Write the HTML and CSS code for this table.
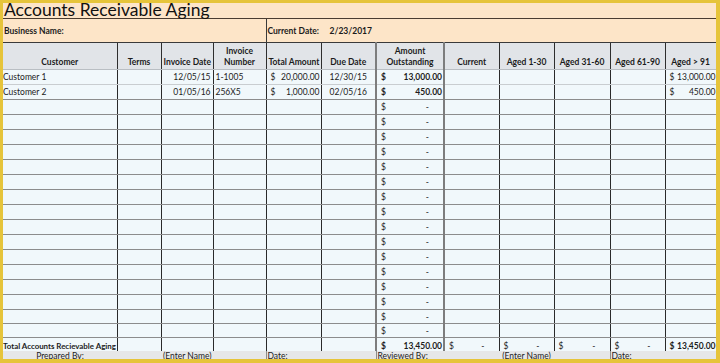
FILE: index.html
```html
<!DOCTYPE html>
<html>
<head>
<meta charset="utf-8">
<link rel="stylesheet" href="styles.css">
</head>
<body>
<div class="frame">
<div class="sheet">
<table class="grid">
<colgroup>
<col style="width:114px"><col style="width:44px"><col style="width:52px"><col style="width:53px"><col style="width:55px"><col style="width:55px"><col style="width:68px"><col style="width:55px"><col style="width:55px"><col style="width:56px"><col style="width:55px"><col style="width:51px">
</colgroup>
<tr class="title-row"><td colspan="12" class="title">Accounts Receivable Aging</td></tr>
<tr class="biz-row"><td colspan="4" class="biz">Business Name:</td><td colspan="8" class="biz date-cell"><span class="lbl">Current Date:</span><span>2/23/2017</span></td></tr>
<tr class="head-row">
<th>Customer</th><th>Terms</th><th>Invoice Date</th><th>Invoice<br>Number</th><th>Total Amount</th><th>Due Date</th><th class="ao">Amount<br>Outstanding</th><th>Current</th><th>Aged 1-30</th><th>Aged 31-60</th><th>Aged 61-90</th><th>Aged &gt; 91</th>
</tr>
<tr class="r first"><td>Customer 1</td><td></td><td class="right">12/05/15</td><td>1-1005</td><td class="m"><div class="acc"><span>$</span><span>20,000.00</span></div></td><td class="center">12/30/15</td><td class="ao m"><div class="acc b"><span>$</span><span>13,000.00</span></div></td><td></td><td></td><td></td><td></td><td class="m last"><div class="acc"><span>$</span><span>13,000.00</span></div></td></tr>
<tr class="r"><td>Customer 2</td><td></td><td class="right">01/05/16</td><td>256X5</td><td class="m"><div class="acc"><span>$</span><span>1,000.00</span></div></td><td class="center">02/05/16</td><td class="ao m"><div class="acc b"><span>$</span><span>450.00</span></div></td><td></td><td></td><td></td><td></td><td class="m last"><div class="acc"><span>$</span><span>450.00</span></div></td></tr>
<tr class="r"><td></td><td></td><td></td><td></td><td></td><td></td><td class="ao m"><div class="acc"><span>$</span><span class="dash">-</span></div></td><td></td><td></td><td></td><td></td><td></td></tr>
<tr class="r"><td></td><td></td><td></td><td></td><td></td><td></td><td class="ao m"><div class="acc"><span>$</span><span class="dash">-</span></div></td><td></td><td></td><td></td><td></td><td></td></tr>
<tr class="r"><td></td><td></td><td></td><td></td><td></td><td></td><td class="ao m"><div class="acc"><span>$</span><span class="dash">-</span></div></td><td></td><td></td><td></td><td></td><td></td></tr>
<tr class="r"><td></td><td></td><td></td><td></td><td></td><td></td><td class="ao m"><div class="acc"><span>$</span><span class="dash">-</span></div></td><td></td><td></td><td></td><td></td><td></td></tr>
<tr class="r"><td></td><td></td><td></td><td></td><td></td><td></td><td class="ao m"><div class="acc"><span>$</span><span class="dash">-</span></div></td><td></td><td></td><td></td><td></td><td></td></tr>
<tr class="r"><td></td><td></td><td></td><td></td><td></td><td></td><td class="ao m"><div class="acc"><span>$</span><span class="dash">-</span></div></td><td></td><td></td><td></td><td></td><td></td></tr>
<tr class="r"><td></td><td></td><td></td><td></td><td></td><td></td><td class="ao m"><div class="acc"><span>$</span><span class="dash">-</span></div></td><td></td><td></td><td></td><td></td><td></td></tr>
<tr class="r"><td></td><td></td><td></td><td></td><td></td><td></td><td class="ao m"><div class="acc"><span>$</span><span class="dash">-</span></div></td><td></td><td></td><td></td><td></td><td></td></tr>
<tr class="r"><td></td><td></td><td></td><td></td><td></td><td></td><td class="ao m"><div class="acc"><span>$</span><span class="dash">-</span></div></td><td></td><td></td><td></td><td></td><td></td></tr>
<tr class="r"><td></td><td></td><td></td><td></td><td></td><td></td><td class="ao m"><div class="acc"><span>$</span><span class="dash">-</span></div></td><td></td><td></td><td></td><td></td><td></td></tr>
<tr class="r"><td></td><td></td><td></td><td></td><td></td><td></td><td class="ao m"><div class="acc"><span>$</span><span class="dash">-</span></div></td><td></td><td></td><td></td><td></td><td></td></tr>
<tr class="r"><td></td><td></td><td></td><td></td><td></td><td></td><td class="ao m"><div class="acc"><span>$</span><span class="dash">-</span></div></td><td></td><td></td><td></td><td></td><td></td></tr>
<tr class="r"><td></td><td></td><td></td><td></td><td></td><td></td><td class="ao m"><div class="acc"><span>$</span><span class="dash">-</span></div></td><td></td><td></td><td></td><td></td><td></td></tr>
<tr class="r"><td></td><td></td><td></td><td></td><td></td><td></td><td class="ao m"><div class="acc"><span>$</span><span class="dash">-</span></div></td><td></td><td></td><td></td><td></td><td></td></tr>
<tr class="r short"><td></td><td></td><td></td><td></td><td></td><td></td><td class="ao m"><div class="acc"><span>$</span><span class="dash">-</span></div></td><td></td><td></td><td></td><td></td><td></td></tr>
<tr class="r short"><td></td><td></td><td></td><td></td><td></td><td></td><td class="ao m"><div class="acc"><span>$</span><span class="dash">-</span></div></td><td></td><td></td><td></td><td></td><td></td></tr>
<tr class="r total"><td class="b tot">Total Accounts Recievable Aging</td><td></td><td></td><td></td><td></td><td></td><td class="ao m"><div class="acc b"><span>$</span><span>13,450.00</span></div></td><td class="m"><div class="acc"><span>$</span><span class="dash">-</span></div></td><td class="m"><div class="acc"><span>$</span><span class="dash">-</span></div></td><td class="m"><div class="acc"><span>$</span><span class="dash">-</span></div></td><td class="m"><div class="acc"><span>$</span><span class="dash">-</span></div></td><td class="m last"><div class="acc b"><span>$</span><span>13,450.00</span></div></td></tr>
<tr class="sign-row"><td class="center">Prepared By:</td><td></td><td class="center">(Enter Name)</td><td></td><td colspan="2" class="sep">Date:</td><td colspan="2" class="sep">Reviewed By:</td><td class="center">(Enter Name)</td><td></td><td colspan="2" class="sep">Date:</td></tr>
</table>
</div>
</div>
</body>
</html>
```
FILE: styles.css
```css
html, body {
  margin: 0;
  padding: 0;
}
body {
  width: 720px;
  height: 363px;
  overflow: hidden;
  background: #e6c43a;
}
.frame {
  padding: 3px 4px 0 3px;
}
.sheet {
  height: 356px;
  overflow: hidden;
  background: #f1f8fb;
}
.grid {
  border-collapse: collapse;
  table-layout: fixed;
  width: 713px;
  font-family: Lato, "Open Sans", sans-serif;
  font-size: 8.5px;
  color: #1c1c1c;
}
.grid td, .grid th {
  padding: 0 2px;
  white-space: nowrap;
  overflow: hidden;
}
.title-row td {
  height: 15px;
  background: #fde5c8;
  border-bottom: 1px solid #4a3c30;
  font-size: 17.5px;
  line-height: 13px;
  vertical-align: top;
  padding-left: 1px;
  overflow: visible;
  color: #111;
}
.biz-row td {
  height: 23px;
  background: #fde5c8;
  border-bottom: 1px solid #3a3a3a;
  font-weight: bold;
  vertical-align: middle;
  padding-left: 1px;
}
.date-cell {
  border-left: 1px solid #3a3a3a;
}
.date-cell .lbl {
  display: inline-block;
  width: 62px;
}
.head-row th {
  height: 25px;
  background: #e1e4e8;
  border-left: 1px solid #2e2e2e;
  border-right: 1px solid #2e2e2e;
  border-bottom: 1px solid #b9bec3;
  font-weight: bold;
  vertical-align: bottom;
  text-align: center;
  line-height: 11px;
  padding-bottom: 1px;
}
.head-row th:first-child { border-left: none; }
.r td {
  height: 14px;
  border-left: 1px solid #2a2a2a;
  border-right: 1px solid #2a2a2a;
  border-bottom: 1px solid #8c8c8c;
  vertical-align: middle;
  line-height: 10px;
}
.r td:first-child { border-left: none; padding-left: 0; }
.r.first td { border-bottom-color: #c9cdd0; }
.r.short td { height: 13px; }
.grid .ao {
  border-left: 2px solid #7d7d7d;
  border-right: 2px solid #7d7d7d;
}
.grid .m {
  padding: 0 1px 0 2px;
}
.grid .m.last {
  padding: 0 0 0 2px;
}
.right { text-align: right; }
.center { text-align: center; }
.b { font-weight: bold; }
.acc {
  display: flex;
  justify-content: space-between;
  padding-left: 2px;
}
.acc .dash {
  padding-right: 13px;
}
.grid .tot {
  overflow: visible;
  font-size: 7.9px;
}
.r.total td {
  height: 13px;
  vertical-align: bottom;
  padding-bottom: 0;
  border-bottom: none;
}
.sign-row td {
  height: 12px;
  background: #e6e7e8;
  vertical-align: top;
  line-height: 11px;
  border: none;
}
.sign-row .sep {
  border-left: 1px solid #8c8c8c;
  padding-left: 1px;
}
```
